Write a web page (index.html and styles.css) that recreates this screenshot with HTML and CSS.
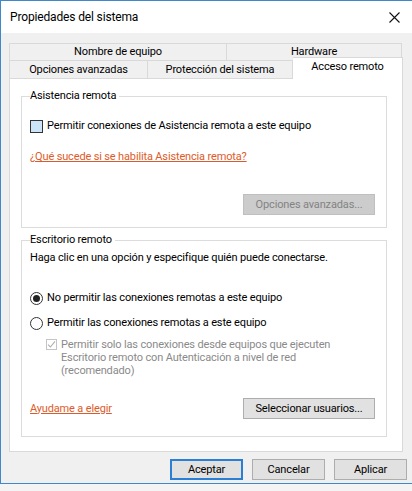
FILE: index.html
```html
<!DOCTYPE html>
<html lang="es">
<head>
<meta charset="utf-8">
<title>Propiedades del sistema</title>
<link rel="stylesheet" href="styles.css">
</head>
<body>
<div class="window">
  <div class="titlebar">
    <span class="title">Propiedades del sistema</span>
    <svg class="close" width="11" height="11" viewBox="0 0 11 11"><path d="M0.5 0.5 L10.5 10.5 M10.5 0.5 L0.5 10.5" stroke="#111" stroke-width="1.1" fill="none"/></svg>
  </div>
  <div class="content">
    <div class="tabs">
      <div class="tabrow back">
        <div class="tab t-nombre">Nombre de equipo</div>
        <div class="tab t-hardware">Hardware</div>
      </div>
      <div class="tabrow front">
        <div class="tab t-opciones">Opciones avanzadas</div>
        <div class="tab t-proteccion">Protección del sistema</div>
        <div class="tab t-acceso selected">Acceso remoto</div>
      </div>
    </div>
    <div class="panel">
      <fieldset class="group g1">
        <legend>Asistencia remota</legend>
        <div class="option check-row">
          <span class="checkbox hover"></span>
          <span>Permitir conexiones de Asistencia remota a este equipo</span>
        </div>
        <a class="link link1">¿Qué sucede si se habilita Asistencia remota?</a>
        <div class="btn-row">
          <span class="btn disabled wide">Opciones avanzadas...</span>
        </div>
      </fieldset>
      <fieldset class="group g2">
        <legend>Escritorio remoto</legend>
        <div class="intro">Haga clic en una opción y especifique quién puede conectarse.</div>
        <div class="option radio-row r1">
          <span class="radio checked"></span>
          <span>No permitir las conexiones remotas a este equipo</span>
        </div>
        <div class="option radio-row r2">
          <span class="radio"></span>
          <span>Permitir las conexiones remotas a este equipo</span>
        </div>
        <div class="sub-option">
          <span class="checkbox small disabled-check">
            <svg width="9" height="9" viewBox="0 0 9 9"><path d="M1 4.6 L3.4 7 L8 1.4" stroke="#b0b0b0" stroke-width="1.1" fill="none"/></svg>
          </span>
          <span class="sub-text">Permitir solo las conexiones desde equipos que ejecuten Escritorio remoto con Autenticación a nivel de red (recomendado)</span>
        </div>
        <div class="bottom-row">
          <a class="link">Ayudame a elegir</a>
          <span class="btn wide">Seleccionar usuarios...</span>
        </div>
      </fieldset>
    </div>
    <div class="footer">
      <span class="btn default">Aceptar</span>
      <span class="btn">Cancelar</span>
      <span class="btn">Aplicar</span>
    </div>
  </div>
</div>
</body>
</html>
```
FILE: styles.css
```css
html, body {
  margin: 0;
  padding: 0;
}
body {
  background: #f4f4f4;
  font-family: Roboto, "Liberation Sans", Arial, sans-serif;
  font-size: 11px;
  letter-spacing: -0.15px;
  color: #000;
}
.window {
  width: 420px;
  height: 484px;
  box-sizing: border-box;
  border: 1px solid #3f88c9;
  background: #f0f0f0;
}
.titlebar {
  height: 32px;
  background: #fff;
  display: flex;
  align-items: center;
  justify-content: space-between;
  padding: 0 18px 0 9px;
}
.title {
  font-size: 12px;
}
.close {
  display: block;
  margin-right: 1px;
}
.content {
  padding: 10px 0 0 8px;
}
.tabs {
  width: 394px;
}
.tabrow {
  display: flex;
}
.tab {
  box-sizing: border-box;
  border: 1px solid #d9d9d9;
  border-bottom: none;
  background: #f0f0f0;
  text-align: center;
  white-space: nowrap;
}
.back .tab {
  height: 17px;
  line-height: 16px;
}
.t-nombre { width: 218px; }
.t-hardware { width: 175px; border-left: none; }
.front {
  align-items: flex-end;
}
.front .tab {
  height: 18px;
  line-height: 17px;
}
.t-opciones { width: 139px; }
.t-proteccion { width: 145px; border-left: none; }
.front .tab.selected {
  width: 110px;
  height: 22px;
  line-height: 17px;
  margin-top: -3px;
  margin-bottom: -1px;
  background: #fff;
  position: relative;
  z-index: 1;
  border-left: none;
}
.panel {
  width: 394px;
  height: 374px;
  box-sizing: border-box;
  border: 1px solid #d9d9d9;
  background: #fff;
  padding: 10px 15px 0 11px;
}
.group {
  margin: 0;
  border: 1px solid #dcdcdc;
  padding: 0 0 0 8px;
}
.group legend {
  padding: 0 3px 0 0;
  margin-left: 0;
  line-height: 14px;
}
.g1 {
  height: 139px;
  box-sizing: border-box;
}
.g2 {
  margin-top: 5px;
  height: 204px;
  box-sizing: border-box;
}
.option {
  display: flex;
  align-items: center;
  gap: 4px;
  height: 14px;
  line-height: 14px;
}
.check-row {
  margin-top: 16px;
}
.checkbox {
  width: 13px;
  height: 13px;
  box-sizing: border-box;
  border: 1px solid #333;
  flex: none;
}
.checkbox.hover {
  background: #cce4f7;
}
.link {
  display: block;
  color: #dd5b2a;
  text-decoration: underline;
  margin-top: 17px;
  line-height: 14px;
  width: max-content;
  cursor: pointer;
}
.btn-row {
  display: flex;
  justify-content: flex-end;
  margin-top: 30px;
  padding-right: 11px;
}
.btn {
  display: inline-flex;
  align-items: center;
  justify-content: center;
  box-sizing: border-box;
  width: 73px;
  height: 21px;
  background: #e1e1e1;
  border: 1px solid #adadad;
  white-space: nowrap;
}
.btn.wide {
  width: 132px;
}
.btn.disabled {
  background: #cccccc;
  border-color: #bfbfbf;
  color: #838383;
}
.intro {
  margin-top: 4px;
  height: 14px;
  line-height: 14px;
}
.r1 {
  margin-top: 26px;
}
.r2 {
  margin-top: 11px;
}
.radio {
  width: 13px;
  height: 13px;
  box-sizing: border-box;
  border: 1px solid #333;
  border-radius: 50%;
  flex: none;
  display: flex;
  align-items: center;
  justify-content: center;
}
.radio.checked::after {
  content: "";
  width: 7px;
  height: 7px;
  border-radius: 50%;
  background: #222;
}
.sub-option {
  display: flex;
  align-items: flex-start;
  gap: 4px;
  margin-top: 8px;
  padding-left: 16px;
  color: #8a8a8a;
}
.checkbox.small {
  width: 11px;
  height: 11px;
  border-color: #c4c4c4;
  display: flex;
  align-items: center;
  justify-content: center;
  margin-top: 1px;
}
.sub-text {
  width: 290px;
  line-height: 13px;
}
.bottom-row {
  display: flex;
  align-items: center;
  justify-content: space-between;
  margin-top: 21px;
  padding-right: 11px;
}
.bottom-row .link {
  margin-top: 0;
}
.footer {
  display: flex;
  gap: 9px;
  padding: 7px 0 0 161px;
}
.btn.default {
  border: 2px solid #2a7fd4;
}
```
